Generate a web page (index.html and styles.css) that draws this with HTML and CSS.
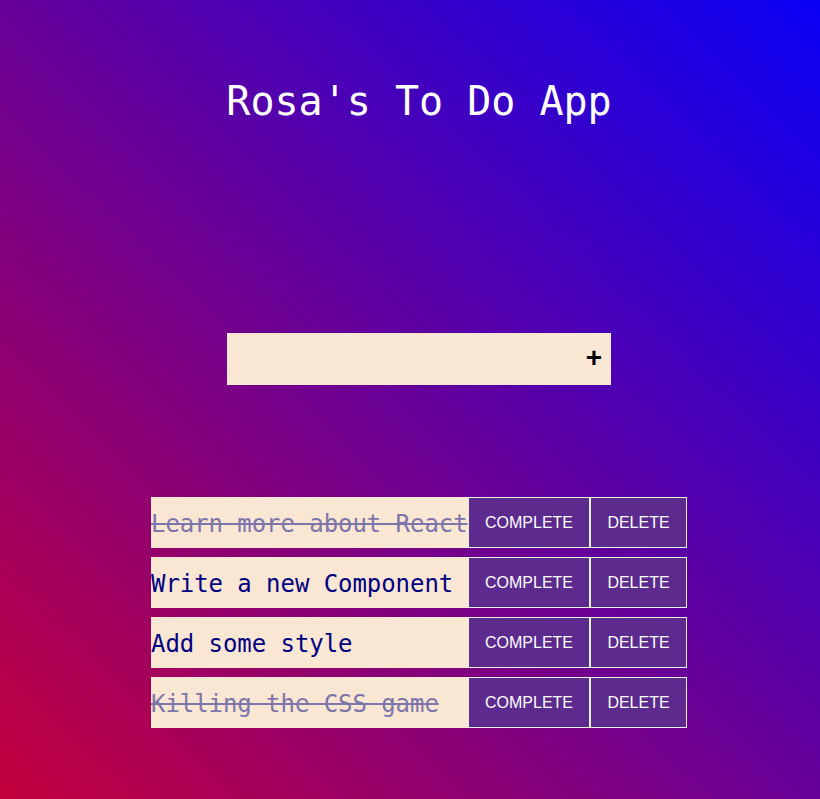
FILE: index.html
```html
<!DOCTYPE html>
<html lang="en">
<head>
<meta charset="utf-8">
<title>Rosa's To Do App</title>
<link rel="stylesheet" href="styles.css">
</head>
<body>
<main class="app">
  <h1 class="title">Rosa's To Do App</h1>
  <form class="add-form">
    <input class="add-input" type="text" aria-label="New todo">
    <button class="add-btn" type="button">+</button>
  </form>
  <ul class="todo-list">
    <li class="todo">
      <span class="todo-text done">Learn more about React</span>
      <button class="btn btn-complete" type="button">COMPLETE</button>
      <button class="btn btn-delete" type="button">DELETE</button>
    </li>
    <li class="todo">
      <span class="todo-text">Write a new Component</span>
      <button class="btn btn-complete" type="button">COMPLETE</button>
      <button class="btn btn-delete" type="button">DELETE</button>
    </li>
    <li class="todo">
      <span class="todo-text">Add some style</span>
      <button class="btn btn-complete" type="button">COMPLETE</button>
      <button class="btn btn-delete" type="button">DELETE</button>
    </li>
    <li class="todo">
      <span class="todo-text done">Killing the CSS game</span>
      <button class="btn btn-complete" type="button">COMPLETE</button>
      <button class="btn btn-delete" type="button">DELETE</button>
    </li>
  </ul>
</main>
</body>
</html>
```
FILE: styles.css
```css
* { box-sizing: border-box; }
html, body { margin: 0; height: 100%; }
body {
  background: linear-gradient(to top right, #c4003c, #0a00f6);
  font-family: "DejaVu Sans Mono", "Liberation Mono", monospace;
  overflow: hidden;
}
.app {
  display: flex;
  flex-direction: column;
  align-items: center;
  padding-left: 18px;
  padding-top: 77px;
}
.title {
  margin: 0;
  font-size: 40px;
  line-height: 48px;
  font-weight: normal;
  color: #fff;
}
.add-form {
  margin-top: 208px;
  width: 384px;
  height: 52px;
  display: flex;
  align-items: center;
  background: #f9e7d3;
}
.add-input {
  flex: 1;
  height: 100%;
  border: none;
  background: transparent;
  outline: none;
  font-family: inherit;
  font-size: 24px;
  padding: 0 10px;
}
.add-btn {
  border: none;
  background: transparent;
  font-family: "Liberation Sans", Arial, sans-serif;
  font-size: 28px;
  font-weight: bold;
  line-height: 1;
  color: #000;
  padding: 0 9px 2px 0;
}
.todo-list {
  list-style: none;
  margin: 112px 0 0;
  padding: 0;
  display: flex;
  flex-direction: column;
  gap: 9px;
}
.todo {
  display: flex;
  width: 536px;
  height: 51px;
}
.todo-text {
  flex: none;
  width: 317px;
  background: #f9e7d3;
  color: #000080;
  font-size: 24px;
  letter-spacing: -0.06px;
  line-height: 51px;
  padding-top: 2px;
  white-space: nowrap;
}
.todo-text.done {
  text-decoration: line-through;
  color: #7e76aa;
}
.btn {
  flex: none;
  height: 51px;
  background: #5c2b8d;
  color: #fff;
  border: 1px solid #e4f4dc;
  font-family: "Liberation Sans", Arial, sans-serif;
  font-size: 16px;
  padding: 0;
  margin: 0;
}
.btn-complete { width: 122px; }
.btn-delete { width: 97px; }
```
